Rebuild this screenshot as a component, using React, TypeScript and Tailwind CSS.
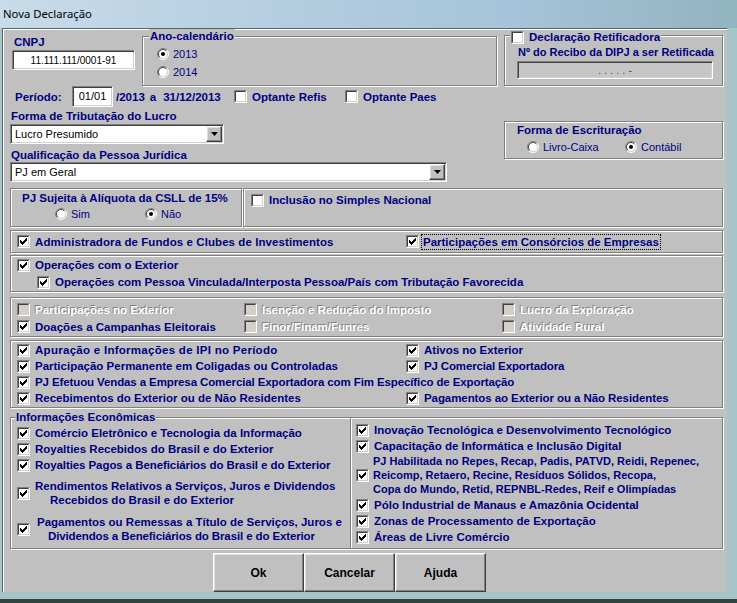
import React from "react";

// classic win32 look helpers
const navy = "text-[#000080]";
const dim = "text-white [text-shadow:-1px_-1px_0_#808080]";
const lbl = "text-[11.5px] leading-[14px] font-bold whitespace-nowrap";
const etched = "border border-[#808080] shadow-[inset_1px_1px_0_#fff,1px_1px_0_#fff]";
const sunken =
  "border border-t-[#808080] border-l-[#808080] border-r-white border-b-white shadow-[inset_1px_1px_0_#404040,inset_-1px_-1px_0_#d4d0c8]";
const raised =
  "border border-t-white border-l-white border-r-[#404040] border-b-[#404040] shadow-[inset_-1px_-1px_0_#808080,inset_1px_1px_0_#dfdfdf]";

const checkPath = [
  [0, 2],
  [1, 3],
  [2, 4],
  [3, 3],
  [4, 2],
  [5, 1],
  [6, 0],
]
  .map(([x, y]) => `M${x + 1} ${y + 1}h1v3h-1z`)
  .join("");

function Box({ checked = false, disabled = false }: { checked?: boolean; disabled?: boolean }) {
  return (
    <span className="block w-[13px] h-[13px] shrink-0 border border-t-[#808080] border-l-[#808080] border-r-white border-b-white">
      <span
        className={`block w-[11px] h-[11px] border border-t-[#404040] border-l-[#404040] border-r-[#d4d0c8] border-b-[#d4d0c8] ${
          disabled ? "bg-[#d4d0c8]" : "bg-white"
        }`}
      >
        {checked && (
          <svg width="9" height="9" viewBox="0 0 9 9" shapeRendering="crispEdges" className="block">
            <path d={checkPath} fill="#000" />
          </svg>
        )}
      </span>
    </span>
  );
}

function Radio({ on = false }: { on?: boolean }) {
  return (
    <svg width="12" height="12" viewBox="0 0 12 12" className="block shrink-0">
      <circle cx="6" cy="6" r="5" fill="#fff" />
      <path d="M2.1 9.9A5.5 5.5 0 0 1 9.9 2.1" fill="none" stroke="#808080" />
      <path d="M9.9 2.1A5.5 5.5 0 0 1 2.1 9.9" fill="none" stroke="#fff" />
      <path d="M2.8 9.2A4.5 4.5 0 0 1 9.2 2.8" fill="none" stroke="#404040" />
      <path d="M9.2 2.8A4.5 4.5 0 0 1 2.8 9.2" fill="none" stroke="#d4d0c8" />
      {on && <circle cx="6" cy="6" r="2" fill="#000" />}
    </svg>
  );
}

function Check({
  label,
  checked = false,
  disabled = false,
  className = "",
  tw = "",
}: {
  label: string;
  checked?: boolean;
  disabled?: boolean;
  className?: string;
  tw?: string;
}) {
  return (
    <div className={`flex items-center h-[16px] ${className}`}>
      <Box checked={checked} disabled={disabled} />
      <span className={`ml-[5px] ${lbl} ${disabled ? dim : navy} ${tw}`}>{label}</span>
    </div>
  );
}

function Combo({ value, className }: { value: string; className: string }) {
  return (
    <div className={`h-[20px] flex items-center bg-white ${sunken} pl-[4px] pr-[1px] ${className}`}>
      <span className="flex-1 text-[11px] text-black leading-[14px]">{value}</span>
      <span className={`w-[16px] h-[16px] bg-[#c0c0c0] ${raised} flex items-center justify-center`}>
        <svg width="7" height="4" viewBox="0 0 7 4">
          <path d="M0 0h7L3.5 4z" fill="#000" />
        </svg>
      </span>
    </div>
  );
}

export default function App() {
  return (
    <div className="w-[737px] h-[603px] flex flex-col overflow-hidden bg-[#a6c5c8] font-['Liberation_Sans',Arial,sans-serif]">
      {/* title bar */}
      <div className="h-[28px] shrink-0 flex items-center pl-[3px] bg-[linear-gradient(to_right,#c8dbea,#b3cde0_40%,#a6c3d9_70%,#92b3c0)]">
        <span className="font-['Noto_Sans',sans-serif] text-[11.3px] text-black">Nova Declaração</span>
      </div>

      <div className="flex pl-[2px]">
        <div className="w-[725px] h-[564px] shrink-0 bg-[#c0c0c0] border-l border-t border-[#52666a] shadow-[inset_1px_1px_0_#fff] flex flex-col pl-[7px] pr-[4px] pt-[4px]">
          {/* CNPJ / ano / retificadora */}
          <div className="flex items-start h-[53px] shrink-0">
            <div className="ml-[2px] w-[123px] flex flex-col">
              <span className={`mt-[2px] h-[14px] pl-[2px] ${lbl} ${navy}`}>CNPJ</span>
              <div className={`mt-[1px] h-[20px] bg-white ${sunken} flex items-center justify-center text-[10px] text-black`}>
                11.111.111/0001-91
              </div>
            </div>
            <div className={`relative ml-[7px] mt-[3px] w-[355px] h-[50px] ${etched} pl-[14px] pt-[8px]`}>
              <span className={`absolute -top-[8px] left-[6px] px-[1px] bg-[#c0c0c0] h-[14px] ${lbl} ${navy}`}>
                Ano-calendário
              </span>
              <div className="flex items-center h-[18px]">
                <Radio on />
                <span className={`ml-[4px] text-[11px] ${navy}`}>2013</span>
              </div>
              <div className="flex items-center h-[18px]">
                <Radio />
                <span className={`ml-[4px] text-[11px] ${navy}`}>2014</span>
              </div>
            </div>
            <div className={`relative ml-[7px] mt-[2px] w-[219px] h-[51px] ${etched} pl-[12px] pt-[9px]`}>
              <div className="absolute -top-[6px] left-[5px] px-[1px] bg-[#c0c0c0] flex items-center h-[14px]">
                <Box />
                <span className={`ml-[5px] ${lbl} ${navy}`}>Declaração Retificadora</span>
              </div>
              <div className={`h-[14px] pl-[1px] ${lbl} text-[11px] ${navy}`}>Nº do Recibo da DIPJ a ser Retificada</div>
              <div className={`mt-[2px] w-[196px] h-[18px] bg-[#c6c6c6] ${sunken} flex items-center justify-center text-[11px] text-[#505050]`}>
                . . . . . -
              </div>
            </div>
          </div>

          {/* período */}
          <div className="flex items-center h-[21px] shrink-0">
            <div className="w-[224px] flex items-center">
              <span className={`ml-[5px] w-[57px] ${lbl} ${navy}`}>Período:</span>
              <div className={`w-[41px] h-[21px] bg-white ${sunken} flex items-center justify-center text-[11px] text-black`}>
                01/01
              </div>
              <span className={`ml-[3px] ${lbl} ${navy}`}>/2013</span>
              <span className={`ml-[5px] ${lbl} ${navy}`}>a</span>
              <span className={`ml-[7px] ${lbl} ${navy}`}>31/12/2013</span>
            </div>
            <Check className="w-[111px]" label="Optante Refis" />
            <Check label="Optante Paes" />
          </div>

          {/* tributação / qualificação / escrituração */}
          <div className="flex items-start h-[75px] shrink-0">
            <div className="w-[437px] flex flex-col">
              <span className={`mt-[2px] pl-[1px] h-[14px] ${lbl} ${navy}`}>Forma de Tributação do Lucro</span>
              <Combo className="mt-[1px] w-[214px]" value="Lucro Presumido" />
              <span className={`mt-[4px] pl-[1px] h-[14px] ${lbl} ${navy}`}>Qualificação da Pessoa Jurídica</span>
              <Combo className="w-[437px]" value="PJ em Geral" />
            </div>
            <div className={`ml-[57px] mt-[14px] w-[219px] h-[38px] ${etched} pl-[12px] pt-[1px]`}>
              <div className={`h-[14px] ${lbl} ${navy}`}>Forma de Escrituração</div>
              <div className="mt-[3px] flex items-center h-[14px] pl-[10px]">
                <div className="w-[98px] flex items-center">
                  <Radio />
                  <span className={`ml-[4px] text-[11px] ${navy}`}>Livro-Caixa</span>
                </div>
                <Radio on />
                <span className={`ml-[4px] text-[11px] ${navy}`}>Contábil</span>
              </div>
            </div>
          </div>

          {/* CSLL / simples */}
          <div className="mt-[6px] flex h-[39px] shrink-0">
            <div className={`w-[232px] ${etched} pl-[11px] pt-[2px]`}>
              <div className={`h-[14px] ${lbl} ${navy}`}>PJ Sujeita à Alíquota da CSLL de 15%</div>
              <div className="mt-[2px] flex items-center h-[14px] pl-[33px]">
                <div className="w-[90px] flex items-center">
                  <Radio />
                  <span className={`ml-[4px] text-[11px] ${navy}`}>Sim</span>
                </div>
                <Radio on />
                <span className={`ml-[4px] text-[11px] ${navy}`}>Não</span>
              </div>
            </div>
            <div className={`ml-[1px] flex-1 ${etched} pl-[7px] pt-[3px]`}>
              <Check label="Inclusão no Simples Nacional" />
            </div>
          </div>

          <div className={`mt-[3px] h-[23px] shrink-0 flex items-center ${etched} pl-[6px]`}>
            <Check className="w-[389px]" checked label="Administradora de Fundos e Clubes de Investimentos" tw="tracking-[0.08px]" />
            <div className="flex items-center">
              <Box checked />
              <span className={`ml-[2px] px-[1px] border border-dotted border-black ${lbl} ${navy}`}>
                Participações em Consórcios de Empresas
              </span>
            </div>
          </div>

          <div className={`mt-[2px] h-[37px] shrink-0 ${etched} pl-[6px] pt-[1px]`}>
            <Check checked label="Operações com o Exterior" />
            <Check
              checked
              className="mt-[1px] ml-[20px]"
              label="Operações com Pessoa Vinculada/Interposta Pessoa/País com Tributação Favorecida"
            />
          </div>

          <div className={`mt-[5px] h-[40px] shrink-0 ${etched} pl-[6px] pt-[3px]`}>
            <div className="flex items-center h-[17px]">
              <Check className="w-[227px]" disabled label="Participações no Exterior" />
              <Check className="w-[258px]" disabled label="Isenção e Redução do Imposto" />
              <Check disabled label="Lucro da Exploração" />
            </div>
            <div className="flex items-center h-[17px]">
              <Check className="w-[227px]" checked label="Doações a Campanhas Eleitorais" />
              <Check className="w-[258px]" disabled label="Finor/Finam/Funres" />
              <Check disabled label="Atividade Rural" />
            </div>
          </div>

          <div className={`mt-[3px] h-[68px] shrink-0 ${etched} pl-[6px] pt-[1px]`}>
            <div className="flex">
              <Check className="w-[389px]" checked label="Apuração e Informações de IPI no Período" tw="tracking-[0.28px]" />
              <Check checked label="Ativos no Exterior" />
            </div>
            <div className="flex">
              <Check className="w-[389px]" checked label="Participação Permanente em Coligadas ou Controladas" />
              <Check checked label="PJ Comercial Exportadora" tw="tracking-[-0.15px]" />
            </div>
            <Check
              checked
              label="PJ Efetuou Vendas a Empresa Comercial Exportadora com Fim Específico de Exportação"
              tw="tracking-[-0.11px]"
            />
            <div className="flex">
              <Check className="w-[389px]" checked label="Recebimentos do Exterior ou de Não Residentes" />
              <Check checked label="Pagamentos ao Exterior ou a Não Residentes" tw="tracking-[-0.08px]" />
            </div>
          </div>

          {/* informações econômicas */}
          <div className={`relative mt-[9px] h-[132px] shrink-0 ${etched} flex`}>
            <span className={`absolute -top-[8px] left-[4px] px-[1px] bg-[#c0c0c0] h-[14px] ${lbl} ${navy}`}>
              Informações Econômicas
            </span>
            <div className="w-[339px] pl-[6px] pt-[7px] flex flex-col">
              <Check checked label="Comércio Eletrônico e Tecnologia da Informação" />
              <Check checked label="Royalties Recebidos do Brasil e do Exterior" />
              <Check checked label="Royalties Pagos a Beneficiários do Brasil e do Exterior" tw="tracking-[-0.08px]" />
              <div className="mt-[6px] flex items-center">
                <Box checked />
                <div className={`ml-[5px] ${lbl} ${navy}`}>
                  <div>Rendimentos Relativos a Serviços, Juros e Dividendos</div>
                  <div className="pl-[15px]">Recebidos do Brasil e do Exterior</div>
                </div>
              </div>
              <div className="mt-[8px] flex items-center">
                <Box checked />
                <div className={`ml-[7px] ${lbl} ${navy}`}>
                  <div>Pagamentos ou Remessas a Título de Serviços, Juros e</div>
                  <div className="pl-[11px] tracking-[-0.12px]">Dividendos a Beneficiários do Brasil e do Exterior</div>
                </div>
              </div>
            </div>
            <div className="w-[2px] border-l border-[#808080] border-r border-r-white" />
            <div className="pl-[4px] pt-[4px] flex flex-col">
              <Check checked label="Inovação Tecnológica e Desenvolvimento Tecnológico" />
              <Check checked label="Capacitação de Informática e Inclusão Digital" />
              <div className="flex items-center">
                <Box checked />
                <div className={`ml-[4px] ${lbl} text-[11px] ${navy}`}>
                  <div>PJ Habilitada no Repes, Recap, Padis, PATVD, Reidi, Repenec,</div>
                  <div>Reicomp, Retaero, Recine, Resíduos Sólidos, Recopa,</div>
                  <div>Copa do Mundo, Retid, REPNBL-Redes, Reif e Olimpíadas</div>
                </div>
              </div>
              <Check className="mt-[1px]" checked label="Pólo Industrial de Manaus e Amazônia Ocidental" />
              <Check checked label="Zonas de Processamento de Exportação" />
              <Check checked label="Áreas de Livre Comércio" />
            </div>
          </div>

          {/* buttons */}
          <div className="mt-[4px] h-[39px] shrink-0 flex pl-[203px]">
            {["Ok", "Cancelar", "Ajuda"].map((b) => (
              <button
                key={b}
                className={`w-[91px] h-full bg-[#c0c0c0] ${raised} text-[12px] font-bold text-black`}
              >
                {b}
              </button>
            ))}
          </div>
        </div>
      </div>
      <div className="h-[7px] shrink-0" />
      <div className="flex-1 bg-[#34423a]" />
    </div>
  );
}
